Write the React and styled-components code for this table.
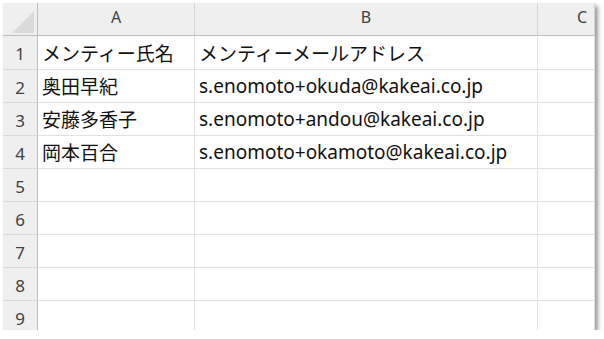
import React from "react";
import styled, { createGlobalStyle } from "styled-components";

const GlobalStyle = createGlobalStyle`
  html, body {
    margin: 0;
    padding: 0;
    background: #ffffff;
  }
`;

const Frame = styled.div`
  padding: 3px 0 0 3px;
`;

const Sheet = styled.div`
  width: 592px;
  height: 327px;
  overflow: hidden;
  display: grid;
  grid-template-columns: 35px 157px 343px 57px;
  grid-template-rows: 33px 34px;
  grid-auto-rows: 33px;
  background: #ffffff;
  box-shadow: 3px 3px 4px rgba(0, 0, 0, 0.4);
  font-family: "Noto Sans", "Noto Sans CJK JP", sans-serif;
`;

const Corner = styled.div`
  position: relative;
  background: #efefef;
  border-right: 1px solid #bdbdbd;
  border-bottom: 1px solid #bdbdbd;
`;

const CornerMark = styled.span`
  position: absolute;
  right: 3px;
  bottom: 2px;
  width: 22px;
  height: 22px;
  background: #dadada;
  clip-path: polygon(100% 0, 100% 100%, 0 100%);
`;

const ColHead = styled.div`
  display: flex;
  align-items: center;
  justify-content: ${(p) => (p.$edge ? "flex-end" : "center")};
  padding: 0 ${(p) => (p.$edge ? "7px" : "0")} 5px 0;
  background: #efefef;
  border-right: 1px solid #d6d6d6;
  border-bottom: 1px solid #bdbdbd;
  font-size: 16px;
  color: #404040;
`;

const RowHead = styled.div`
  display: flex;
  align-items: center;
  justify-content: center;
  padding-top: 2px;
  background: #efefef;
  border-right: 1px solid #bdbdbd;
  border-bottom: 1px solid #d9d9d9;
  font-size: 17px;
  color: #404040;
`;

const Cell = styled.div`
  display: flex;
  align-items: center;
  padding-left: 4px;
  border-right: 1px solid #e1e1e1;
  border-bottom: 1px solid #e1e1e1;
  font-size: 19px;
  color: #111111;
  white-space: nowrap;
  overflow: hidden;
`;

const rows = [
  ["メンティー氏名", "メンティーメールアドレス"],
  ["奥田早紀", "s.enomoto+okuda@kakeai.co.jp"],
  ["安藤多香子", "s.enomoto+andou@kakeai.co.jp"],
  ["岡本百合", "s.enomoto+okamoto@kakeai.co.jp"],
  ["", ""],
  ["", ""],
  ["", ""],
  ["", ""],
  ["", ""],
];

export default function App() {
  return (
    <>
      <GlobalStyle />
      <Frame>
        <Sheet>
          <Corner>
            <CornerMark />
          </Corner>
          <ColHead>A</ColHead>
          <ColHead>B</ColHead>
          <ColHead $edge>C</ColHead>
          {rows.map(([a, b], i) => (
            <React.Fragment key={i}>
              <RowHead>{i + 1}</RowHead>
              <Cell>{a}</Cell>
              <Cell>{b}</Cell>
              <Cell />
            </React.Fragment>
          ))}
        </Sheet>
      </Frame>
    </>
  );
}
